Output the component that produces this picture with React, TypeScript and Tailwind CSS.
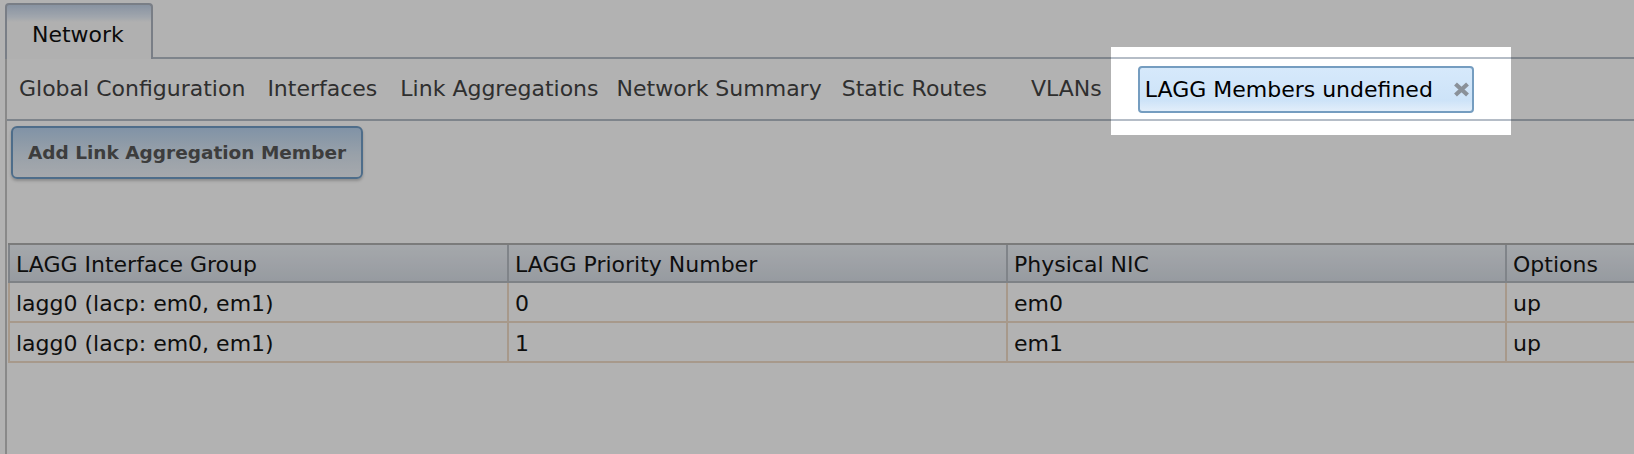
import React from 'react';

const navItems = [
  { label: 'Global Configuration', cls: 'ml-[12px]' },
  { label: 'Interfaces', cls: 'ml-[22px]' },
  { label: 'Link Aggregations', cls: 'ml-[23px]' },
  { label: 'Network Summary', cls: 'ml-[18px]' },
  { label: 'Static Routes', cls: 'ml-[20px]' },
  { label: 'VLANs', cls: 'ml-[44px]' },
];

const columns = ['LAGG Interface Group', 'LAGG Priority Number', 'Physical NIC', 'Options'];

const rows = [
  ['lagg0 (lacp: em0, em1)', '0', 'em0', 'up'],
  ['lagg0 (lacp: em0, em1)', '1', 'em1', 'up'],
];

const CloseIcon = () => (
  <svg width="17" height="15" viewBox="0 0 17 15" className="blur-[0.5px]">
    <path d="M2.5 2 L14.5 13 M14.5 2 L2.5 13" stroke="#8a9199" strokeWidth="4.2" strokeLinecap="butt" fill="none" />
  </svg>
);

export default function App() {
  return (
    <div className="w-full h-screen overflow-hidden bg-white flex flex-col font-['DejaVu_Sans',Verdana,sans-serif] text-[22px] leading-[26px]">
      {/* Top tab strip */}
      <div className="flex pl-[5px] pt-[3px]">
        <div className="h-[56px] w-[148px] shrink-0 border-2 border-b-0 border-[#aeb5c1] rounded-t-[4px] pl-[25px] pt-[17px] text-[#111] bg-[linear-gradient(#c4d3e8,#e6eef8_12px,#fcfcfc_17px)]">
          Network
        </div>
        <div className="flex-1 border-b-2 border-[#b5bdc7]" />
      </div>

      {/* Panel */}
      <div className="flex-1 ml-[5px] border-l-2 border-[#c5c5c5] flex flex-col">
        <div className="h-[62px] shrink-0 flex items-center border-b-2 border-[#b5bdc7] text-[#444] whitespace-nowrap">
          {navItems.map((item) => (
            <span key={item.label} className={item.cls}>
              {item.label}
            </span>
          ))}

          {/* Active tab, spotlighted */}
          <div className="relative ml-[36px]">
            <div className="h-[47px] w-[336px] flex items-center border-2 border-[#759dc0] rounded-[4px] pl-[5px] text-black bg-[linear-gradient(#d6e9fb,#cde3f8_75%,#e2eefa)]">
              <span className="mt-[1px]">LAGG Members undefined</span>
              <span className="ml-[20px] flex items-center">
                <CloseIcon />
              </span>
            </div>
            <div className="pointer-events-none absolute z-10 -left-[27px] -right-[37px] -top-[19px] -bottom-[22px] shadow-[0_0_0_9999px_rgba(0,0,0,0.3)]" />
          </div>
        </div>

        <div className="pl-[4px] pt-[5px]">
          <button className="h-[53px] w-[352px] border-2 border-[#709dc6] rounded-[6px] font-bold text-[18.5px] text-[#585858] bg-[linear-gradient(#b9d3ee,#dbe7f3_55%,#eef2f7)] shadow-[0_2px_3px_rgba(0,0,0,0.22)]">
            Add Link Aggregation Member
          </button>
        </div>

        {/* Grid */}
        <div className="mt-[64px] ml-[1px] w-[1996px] border-t-2 border-[#b1b1b1] text-[#151515]">
          <div className="grid grid-cols-[499px_499px_499px_499px] h-[38px] border-b-2 border-[#b5bac0] bg-[linear-gradient(#edf1f6,#d8dee6)]">
            {columns.map((c) => (
              <div key={c} className="border-l-2 border-[#b8bdc4] pl-[6px] flex items-center pt-[3px]">
                {c}
              </div>
            ))}
          </div>
          {rows.map((r, i) => (
            <div key={i} className="grid grid-cols-[499px_499px_499px_499px] h-[40px] border-b-2 border-[#efdcc8]">
              {r.map((v, j) => (
                <div key={j} className="border-l-2 border-[#efdcc8] pl-[6px] flex items-center pt-[4px]">
                  {v}
                </div>
              ))}
            </div>
          ))}
        </div>
      </div>
    </div>
  );
}
